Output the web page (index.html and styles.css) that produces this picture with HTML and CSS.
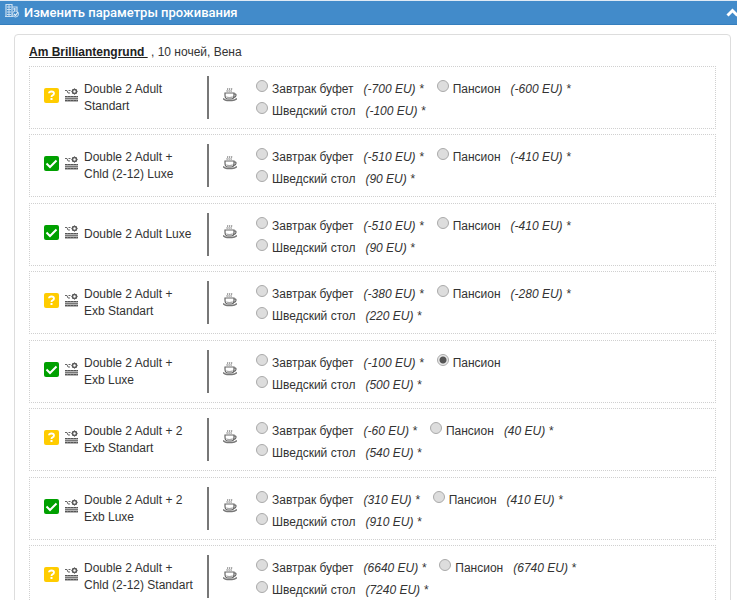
FILE: index.html
```html
<!DOCTYPE html>
<html lang="ru">
<head>
<meta charset="utf-8">
<title>Изменить параметры проживания</title>
<link rel="stylesheet" href="styles.css">
</head>
<body>
<svg class="sprite" aria-hidden="true">
  <symbol id="pool" viewBox="0 0 14 14">
    <path d="M1 2.500h2l1 2.500h2M4.500 2.500h2" fill="none" stroke="#666" stroke-width="1"/>
    <circle cx="10.500" cy="3.500" r="2" fill="#fff" stroke="#555" stroke-width="1.500"/>
    <path d="M10.500 0v1.500M10.500 5.500V7M7 3.500h1.500M12.500 3.500H14M8 1l1 1M13 1l-1 1M8 6l1-1M13 6l-1-1" stroke="#777" stroke-width=".7"/>
    <path d="M1 8h13v6H1z" fill="#b5b5b5"/>
    <path d="M1 8.500h13M1 10.500h13M1 12.500h13" stroke="#777" stroke-width="1"/>
    <path d="M1 8.500h13M1 12.500h13" stroke="#555" stroke-width="1" stroke-dasharray="2 1"/>
  </symbol>
  <symbol id="cup" viewBox="0 0 14 14">
    <path d="M4.500 0q1 1-.2 2t.2 2M6.500 0q1 1-.2 2t.2 2M8.500 0q1 1-.2 2t.2 2" fill="none" stroke="#888" stroke-width=".9"/>
    <path d="M2 5h9v2q0 4-3 4H5Q2 11 2 7z" fill="#fff" stroke="#666" stroke-width="1.200"/>
    <path d="M3 8q3 2 7 0l-2 3H5z" fill="#aaa"/>
    <path d="M11 6h1.500q1 1 0 2.500L10 10" fill="none" stroke="#666" stroke-width="1.200"/>
    <path d="M0 10.500q2 2 4 2h5q3 0 5-2" fill="none" stroke="#777" stroke-width="1.500"/>
  </symbol>
  <symbol id="question" viewBox="0 0 15 15">
    <rect width="15" height="15" rx="2" fill="#fc0"/>
    <path d="M5 5.200Q5 3.500 7.400 3.500 10 3.500 10 5.500 10 6.800 8.500 7.300 7.500 7.700 7.500 9" fill="none" stroke="#fff" stroke-width="1.800"/>
    <rect x="6.500" y="10" width="2" height="2" fill="#fff"/>
  </symbol>
  <symbol id="check" viewBox="0 0 15 15">
    <rect width="15" height="15" rx="2" fill="#00a000"/>
    <path d="M2.500 7.500l3.500 3.500 6.500-6.500" fill="none" stroke="#fff" stroke-width="2"/>
  </symbol>
</svg>

<header class="bar">
  <svg class="bar-icon" viewBox="0 0 14 15" aria-hidden="true">
    <path d="M1 14V1.500h6V14M7 4h5v4M0 13.500h8" fill="none" stroke="#c9def1" stroke-width="1.200"/>
    <path d="M2 4h4M2 6.500h4M2 9h4M2 11.500h4M4 2v11M8 6h3M9.500 5v3" stroke="#c9def1" stroke-width="1"/>
    <circle cx="10.500" cy="11" r="3" fill="#428bca" stroke="#c9def1"/>
    <path d="M9 11l1.500 1.500L13 9" fill="none" stroke="#e4eff8" stroke-width="1.200"/>
  </svg>
  <h1 class="bar-title">Изменить параметры проживания</h1>
  <button class="collapse" type="button" aria-label="Свернуть">
    <svg viewBox="0 0 13 9" aria-hidden="true"><path d="M1.500 7.500l5-5 5 5" fill="none" stroke="#fff" stroke-width="3"/></svg>
  </button>
</header>

<main class="panel">
  <p class="hotel"><a href="#hotel">Am Brilliantengrund </a> , 10 ночей, Вена</p>
  <div class="rooms" id="rooms"></div>
</main>
<script src="rooms.js"></script>
</body>
</html>
```
FILE: styles.css
```css
* {
  box-sizing: border-box;
}

body {
  margin: 0;
  background: #fff;
  color: #333;
  font: 12px/17px "Liberation Sans", Arial, sans-serif;
}

.sprite {
  position: absolute;
  width: 0;
  height: 0;
}

.bar {
  display: flex;
  align-items: center;
  height: 25px;
  padding-left: 5px;
  border-top: 1px solid #dfeaf5;
  border-bottom: 1px solid #357ebd;
  background: #428bca;
  color: #fff;
}

.bar-icon {
  width: 14px;
  height: 15px;
  margin: 0 5px 4px 0;
}

.bar-title {
  flex: 1;
  margin: 0;
  font-family: Roboto, "Liberation Sans", sans-serif;
  font-size: 13px;
  font-weight: 500;
}

.collapse {
  flex: none;
  width: 11px;
  height: 9px;
  padding: 0;
  border: 0;
  background: none;
  overflow: hidden;
}

.collapse svg {
  display: block;
  width: 13px;
  height: 9px;
}

.panel {
  margin: 9px 6px 14px 14px;
  padding: 9px 14px 14px;
  border: 1px solid #ddd;
  border-radius: 4px;
}

.hotel {
  margin: 0 0 5px;
}

.hotel a {
  color: #222;
  font-weight: 700;
  white-space: pre;
}

.room {
  display: flex;
  align-items: center;
  height: 63px;
  margin: 0 0 5px;
  padding: 0 40px 0 14px;
  border: 1px dotted #d0d0d0;
}

.room:nth-child(even) {
  margin-bottom: 6px;
}

.status {
  flex: none;
  width: 15px;
  height: 15px;
  margin: 0 5px 5px 0;
}

.icon {
  flex: none;
  width: 14px;
  height: 14px;
  margin-bottom: 5px;
}

.name {
  flex: none;
  width: 112px;
  margin: 0 11px 0 6px;
}

.meal {
  display: flex;
  flex: 1;
  align-items: center;
  gap: 19px;
  height: 43px;
  padding-left: 14px;
  border-left: 2px solid #777;
}

.options {
  display: flex;
  flex: 1;
  flex-wrap: wrap;
  column-gap: 13px;
  min-width: 0;
  padding-top: 4px;
}

.option {
  display: flex;
  line-height: 22px;
  white-space: nowrap;
}

.option input {
  appearance: none;
  width: 12px;
  height: 12px;
  margin: 2px 4px 0 0;
  border: 1px solid #aaa;
  border-radius: 50%;
  background: #ddd;
}

.option input:checked {
  background: radial-gradient(circle, #555 0 3px, #e8e8e8 4px);
}

.option em {
  margin-left: 10px;
}
```
FILE: rooms.js
```javascript
const rooms = [
  ["question", "Double 2 Adult Standart", -700, -600, -100],
  ["check", "Double 2 Adult + Chld (2-12) Luxe", -510, -410, 90],
  ["check", "Double 2 Adult Luxe", -510, -410, 90],
  ["question", "Double 2 Adult + Exb Standart", -380, -280, 220],
  ["check", "Double 2 Adult + Exb Luxe", -100, null, 500],
  ["question", "Double 2 Adult + 2 Exb Standart", -60, 40, 540],
  ["check", "Double 2 Adult + 2 Exb Luxe", 310, 410, 910],
  ["question", "Double 2 Adult + Chld (2-12) Standart", 6640, 6740, 7240]
];
const meals = ["Завтрак буфет", "Пансион", "Шведский стол"];

const option = (meal, price) => `
  <label class="option"><input type="radio" name="stay"${price === null ? " checked" : ""}>
    <span>${meal}</span>${price === null ? "" : `<em>(${price} EU) *</em>`}</label>`;

document.getElementById("rooms").innerHTML = rooms.map(([status, name, ...prices]) => `
  <section class="room">
    <svg class="status" aria-hidden="true"><use href="#${status}"/></svg>
    <svg class="icon" aria-hidden="true"><use href="#pool"/></svg>
    <p class="name">${name}</p>
    <div class="meal">
      <svg class="icon" aria-hidden="true"><use href="#cup"/></svg>
      <div class="options">${meals.map((meal, i) => option(meal, prices[i])).join("")}</div>
    </div>
  </section>`).join("");
```
